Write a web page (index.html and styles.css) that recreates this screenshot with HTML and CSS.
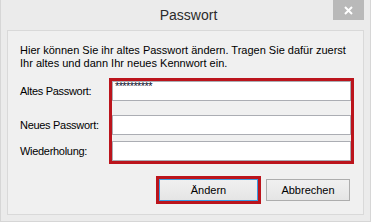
FILE: index.html
```html
<!DOCTYPE html>
<html>
<head>
<meta charset="utf-8">
<link rel="stylesheet" href="styles.css">
</head>
<body>
<div class="window">
  <div class="titlebar">
    <div></div>
    <div class="title">Passwort</div>
    <div class="close-wrap">
      <div class="close">
        <svg width="9" height="9" viewBox="0 0 9 9"><path d="M1 1L8 8M8 1L1 8" stroke="#fff" stroke-width="2" fill="none"/></svg>
      </div>
    </div>
  </div>
  <div class="panel">
    <p class="intro">Hier können Sie ihr altes Passwort ändern. Tragen Sie dafür zuerst<br>Ihr altes und dann Ihr neues Kennwort ein.</p>
    <div class="form">
      <div class="labels">
        <div class="label first">Altes Passwort:</div>
        <div class="label second">Neues Passwort:</div>
        <div class="label third">Wiederholung:</div>
      </div>
      <div class="hl fields">
        <div class="field first"><span class="dots">**********</span></div>
        <div class="field second"></div>
        <div class="field third"></div>
      </div>
    </div>
    <div class="actions">
      <div class="hl btn-hl"><div class="btn primary">Ändern</div></div>
      <div class="btn cancel">Abbrechen</div>
    </div>
  </div>
</div>
</body>
</html>
```
FILE: styles.css
```css
html, body {
  margin: 0;
  padding: 0;
}
body {
  font-family: "Liberation Sans", Arial, sans-serif;
  font-size: 11px;
  color: #000;
}
.window {
  width: 371px;
  height: 222px;
  box-sizing: border-box;
  background: #ebebeb;
  border: 1px solid #d6d6d6;
  border-top: none;
  padding: 0 6px;
}
.titlebar {
  height: 30px;
  display: grid;
  grid-template-columns: 1fr auto 1fr;
  margin-right: -6px;
}
.title {
  font-size: 14px;
  color: #2b2b2b;
  line-height: 31px;
  padding-left: 0;
}
.close-wrap {
  display: flex;
  justify-content: flex-end;
  align-items: flex-start;
  padding-right: 6px;
}
.close {
  width: 31px;
  height: 20px;
  background: #b9b9b9;
  display: flex;
  align-items: center;
  justify-content: center;
}
.panel {
  height: 185px;
  box-sizing: border-box;
  background: #f0f0f0;
  border: 1px solid #d9d9d9;
  padding: 13px 9px 0 12px;
}
.intro {
  margin: 0;
  line-height: 13px;
  white-space: nowrap;
}
.form {
  display: flex;
  margin-top: 8px;
}
.labels {
  width: 89px;
  flex: none;
  display: flex;
  flex-direction: column;
  padding-top: 3px;
  white-space: nowrap;
  letter-spacing: -0.3px;
}
.label {
  height: 20px;
  line-height: 20px;
}
.label.second, .field.second { margin-top: 14px; }
.label.third, .field.third { margin-top: 6px; }
.hl {
  border: 3px solid #bb141c;
}
.fields {
  flex: 1;
  display: flex;
  flex-direction: column;
}
.field {
  height: 20px;
  box-sizing: border-box;
  background: #fff;
  border: 1px solid #abadb3;
  padding: 0 2px;
}
.dots {
  font-size: 11px;
  line-height: 9px;
  display: block;
  letter-spacing: -0.6px;
  color: #0a0a2a;
}
.actions {
  display: flex;
  justify-content: flex-end;
  align-items: center;
  gap: 5px;
  margin-top: 12px;
  padding-right: 4px;
}
.btn {
  height: 22px;
  box-sizing: border-box;
  display: flex;
  align-items: center;
  justify-content: center;
  background: linear-gradient(#f0f0f0, #e5e5e5);
  border: 1px solid #adadad;
}
.primary {
  width: 99px;
  border-color: #3c9be0;
}
.cancel {
  width: 84px;
}
```
